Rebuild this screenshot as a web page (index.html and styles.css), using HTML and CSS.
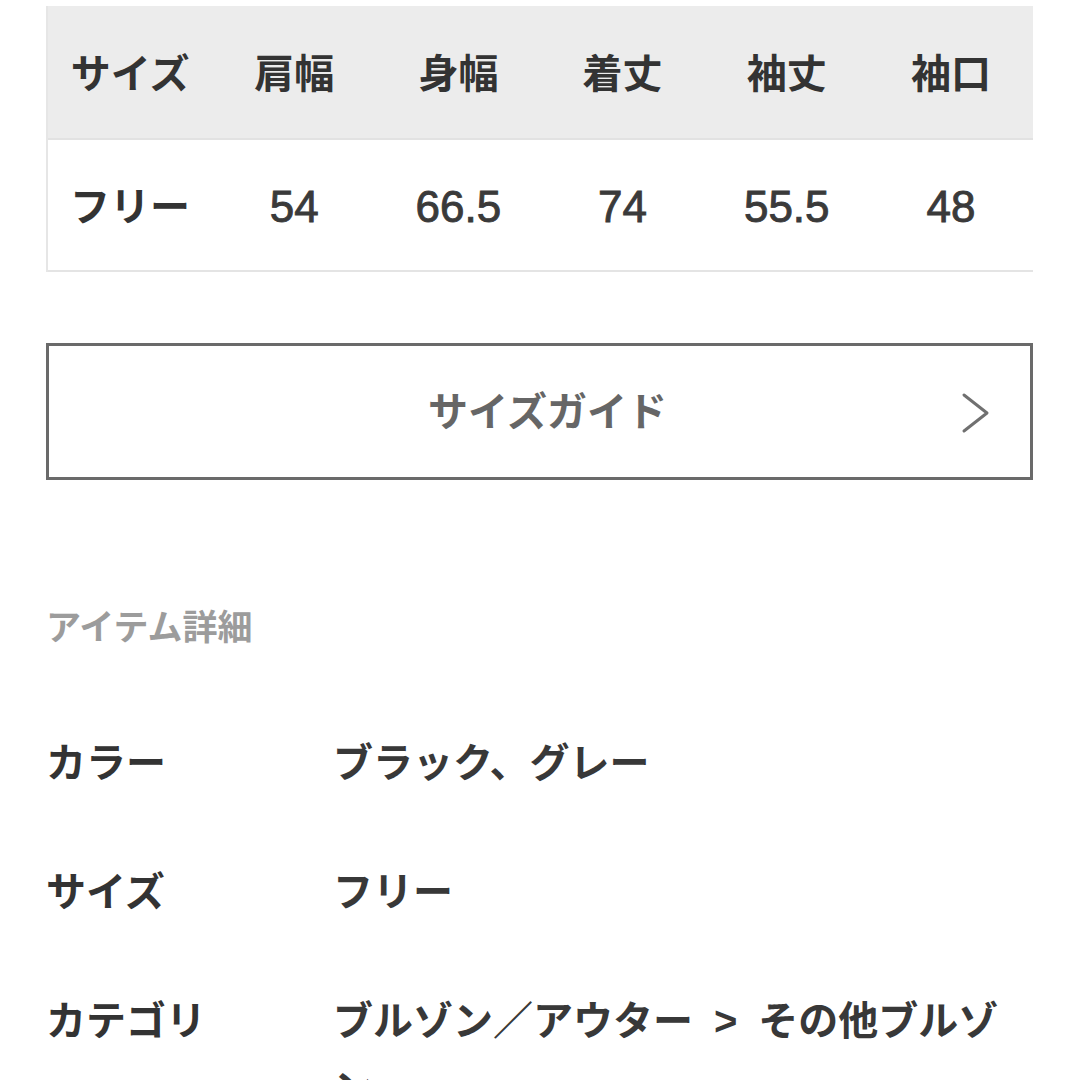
FILE: index.html
```html
<!DOCTYPE html>
<html lang="ja">
<head>
<meta charset="utf-8">
<link rel="stylesheet" href="styles.css">
</head>
<body>
<div class="page">
  <div class="size-table">
    <div class="row head">
      <div class="cell">サイズ</div>
      <div class="cell">肩幅</div>
      <div class="cell">身幅</div>
      <div class="cell">着丈</div>
      <div class="cell">袖丈</div>
      <div class="cell">袖口</div>
    </div>
    <div class="row body">
      <div class="cell">フリー</div>
      <div class="cell num">54</div>
      <div class="cell num">66.5</div>
      <div class="cell num">74</div>
      <div class="cell num">55.5</div>
      <div class="cell num">48</div>
    </div>
  </div>

  <div class="guide-btn">
    <span class="guide-spacer"></span>
    <span class="guide-label">サイズガイド</span>
    <span class="guide-arrow">
      <svg width="30" height="44" viewBox="0 0 30 44"><polyline points="4,4 27,22 4,40" fill="none" stroke="#707070" stroke-width="3" stroke-linecap="round" stroke-linejoin="round"/></svg>
    </span>
  </div>

  <h2 class="section-title">アイテム詳細</h2>

  <dl class="details">
    <div class="detail-row">
      <dt>カラー</dt>
      <dd>ブラック、グレー</dd>
    </div>
    <div class="detail-row">
      <dt>サイズ</dt>
      <dd>フリー</dd>
    </div>
    <div class="detail-row">
      <dt>カテゴリ</dt>
      <dd>ブルゾン／アウター<span class="sep">&gt;</span>その他ブルゾン</dd>
    </div>
  </dl>
</div>
</body>
</html>
```

FILE: styles.css
```css
html, body {
  margin: 0;
  padding: 0;
  background: #ffffff;
}

body {
  font-family: "Liberation Sans", "Noto Sans CJK JP", sans-serif;
  color: #333333;
  overflow: hidden;
  height: 1080px;
}

.page {
  padding: 6px 47px 0 46px;
}

.size-table {
  border-left: 2px solid #e6e6e6;
}

.row {
  display: grid;
  grid-template-columns: repeat(6, 1fr);
  align-items: center;
}

.row.head {
  height: 132px;
  background: #ececec;
  border-bottom: 2px solid #e2e2e2;
  padding-top: 3px;
  box-sizing: border-box;
  height: 134px;
}

.row.body {
  height: 132px;
  box-sizing: border-box;
  padding-top: 3px;
  border-bottom: 2px solid #e4e4e4;
}

.cell {
  text-align: center;
  font-size: 40px;
  font-weight: 700;
  line-height: 1;
  color: #333333;
}

.cell.num {
  font-size: 44px;
  font-weight: 400;
  -webkit-text-stroke: 0.9px #3a3a3a;
  color: #3a3a3a;
}

.guide-btn {
  margin-top: 71px;
  height: 137px;
  box-sizing: border-box;
  border: 3px solid #6a6a6a;
  display: grid;
  grid-template-columns: 1fr auto 1fr;
  align-items: center;
}

.guide-label {
  font-size: 40px;
  font-weight: 700;
  color: #666666;
  line-height: 1;
  padding-left: 16px;
}

.guide-arrow {
  justify-self: end;
  margin-right: 40px;
  display: flex;
  margin-top: 2px;
}

.section-title {
  margin: 123px 0 0 0;
  font-size: 35px;
  line-height: 50px;
  font-weight: 700;
  color: #9c9c9c;
}

.details {
  margin: 76px 0 0 0;
}

.detail-row {
  display: grid;
  grid-template-columns: 287px 1fr;
  margin-bottom: 61px;
}

.detail-row dt,
.detail-row dd {
  margin: 0;
  font-size: 40px;
  line-height: 68px;
  font-weight: 700;
  color: #333333;
}

.detail-row dd {
  color: #383838;
}

.sep {
  padding: 0 21px;
}
```
